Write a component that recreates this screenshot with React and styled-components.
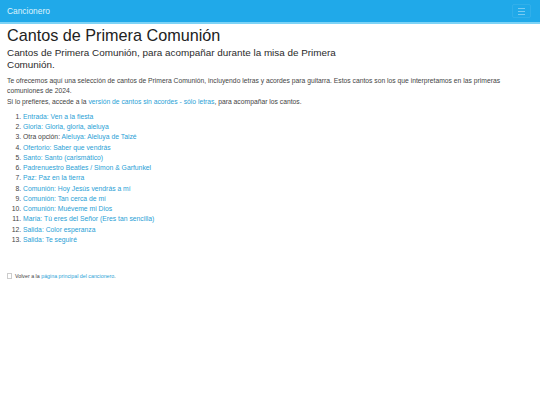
import React from 'react';
import styled, { createGlobalStyle } from 'styled-components';

const GlobalStyle = createGlobalStyle`
  html, body {
    margin: 0;
    padding: 0;
    background: #ffffff;
    font-family: "Liberation Sans", Arial, sans-serif;
    color: #444444;
  }
`;

const Navbar = styled.nav`
  display: flex;
  align-items: center;
  justify-content: space-between;
  height: 22px;
  padding: 0 9px 0 7px;
  background: #20a9e9;
  border-bottom: 2px solid #7dd3f6;
`;

const Brand = styled.a`
  color: #dff3fc;
  font-size: 8.4px;
  text-decoration: none;
`;

const Toggler = styled.button`
  display: flex;
  flex-direction: column;
  justify-content: center;
  gap: 2px;
  width: 19px;
  height: 14px;
  padding: 0 5px;
  background: transparent;
  border: 1px solid rgba(255, 255, 255, 0.08);
  border-radius: 2px;
`;

const TogglerBar = styled.span`
  display: block;
  height: 1px;
  background: rgba(255, 255, 255, 0.4);
`;

const Main = styled.main`
  padding: 0 7px;
`;

const Title = styled.h1`
  margin: 1px 0 2px;
  font-size: 16.2px;
  font-weight: 400;
  line-height: 20px;
  color: #222;
`;

const Lead = styled.p`
  margin: 0 0 4.5px;
  max-width: 340px;
  font-size: 9.9px;
  line-height: 12.4px;
  color: #2a2a2a;
`;

const Text = styled.p`
  margin: 0 0 ${(p) => p.$gap || 0}px;
  font-size: 6.75px;
  line-height: 9.5px;
`;

const Link = styled.a`
  color: #2a9fd6;
  text-decoration: none;
`;

const SongList = styled.ol`
  margin: 5px 0 0;
  padding-left: 16px;
  font-size: 6.8px;
  line-height: 10.25px;
`;

const Footer = styled.p`
  display: flex;
  align-items: center;
  gap: 3px;
  margin: 27px 0 0;
  font-size: 5.3px;
  line-height: 8px;
`;

const Box = styled.span`
  display: inline-block;
  width: 3px;
  height: 4px;
  border: 1px solid #ccc;
`;

const songs = [
  { pre: 'Entrada: Ven a la fiesta' },
  { pre: 'Gloria: Gloria, gloria, aleluya' },
  { plain: 'Otra opción: ', pre: 'Aleluya: Aleluya de Taizé' },
  { pre: 'Ofertorio: Saber que vendrás' },
  { pre: 'Santo: Santo (carismático)' },
  { pre: 'Padrenuestro Beatles / Simon & Garfunkel' },
  { pre: 'Paz: Paz en la tierra' },
  { pre: 'Comunión: Hoy Jesús vendrás a mí' },
  { pre: 'Comunión: Tan cerca de mí' },
  { pre: 'Comunión: Muéveme mi Dios' },
  { pre: 'María: Tú eres del Señor (Eres tan sencilla)' },
  { pre: 'Salida: Color esperanza' },
  { pre: 'Salida: Te seguiré' },
];

export default function App() {
  return (
    <>
      <GlobalStyle />
      <Navbar>
        <Brand href="#">Cancionero</Brand>
        <Toggler aria-label="Menú">
          <TogglerBar />
          <TogglerBar />
          <TogglerBar />
        </Toggler>
      </Navbar>
      <Main>
        <Title>Cantos de Primera Comunión</Title>
        <Lead>Cantos de Primera Comunión, para acompañar durante la misa de Primera Comunión.</Lead>
        <Text $gap={2}>
          Te ofrecemos aquí una selección de cantos de Primera Comunión, incluyendo letras y acordes para guitarra. Estos cantos son los que interpretamos en las primeras comuniones de 2024.
        </Text>
        <Text>
          Si lo prefieres, accede a la <Link href="#">versión de cantos sin acordes - sólo letras</Link>, para acompañar los cantos.
        </Text>
        <SongList>
          {songs.map((s) => (
            <li key={s.pre}>
              {s.plain}
              <Link href="#">{s.pre}</Link>
            </li>
          ))}
        </SongList>
        <Footer>
          <Box />
          <span>
            Volver a la <Link href="#">página principal del cancionero</Link>.
          </span>
        </Footer>
      </Main>
    </>
  );
}
